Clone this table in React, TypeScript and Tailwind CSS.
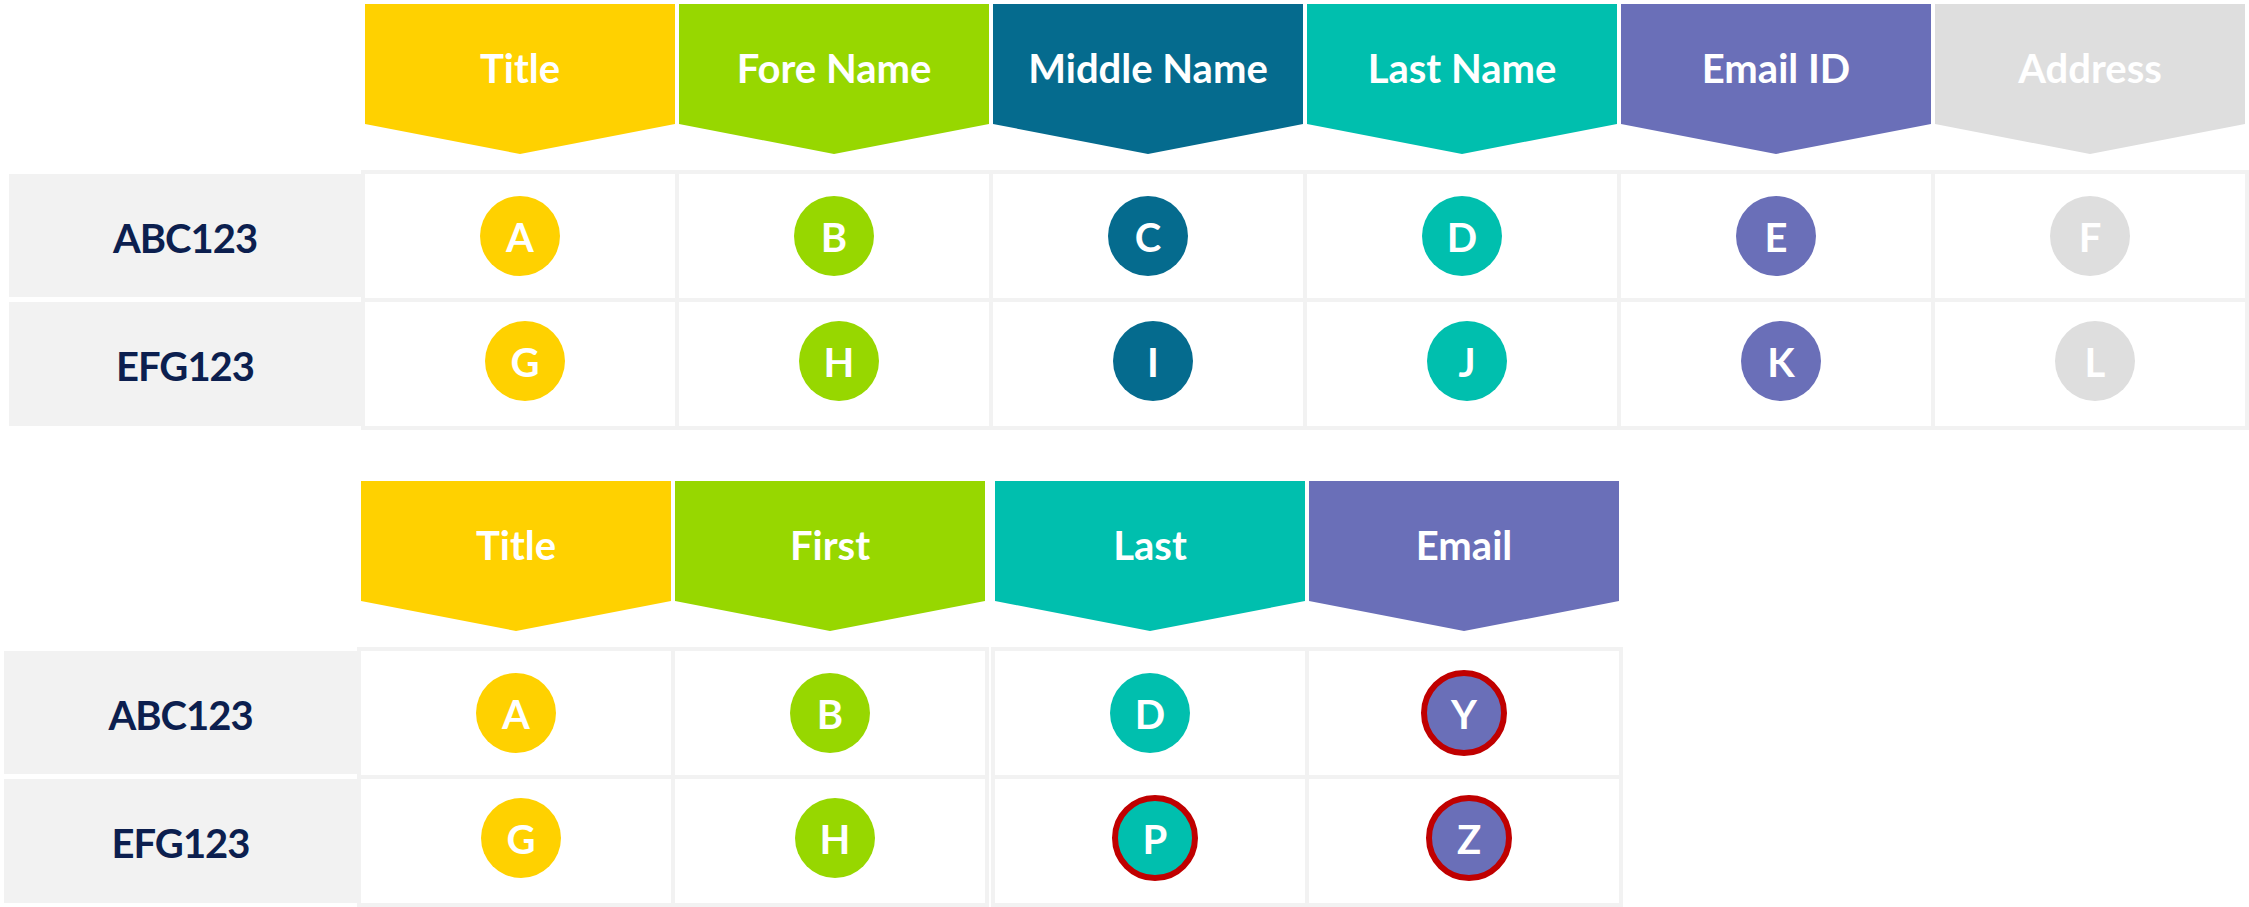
import React from "react";

type Col = { title: string; color: string };

const FONT = "font-['Lato','Open_Sans',sans-serif]";

const HeaderShape = ({ title, color }: Col) => (
  <div
    className={`w-[310px] h-[150px] shrink-0 [clip-path:polygon(0_0,100%_0,100%_80%,50%_100%,0_80%)] ${color}`}
  >
    <div className="h-[120px] pt-[8px] flex items-center justify-center text-white font-bold text-[40px] leading-none">
      {title}
    </div>
  </div>
);

type CellData = { letter: string; color: string; ring?: boolean };

const Circle = ({ letter, color, ring, shifted }: CellData & { shifted?: boolean }) => (
  <div
    className={`bg-white h-[124px] flex items-center justify-center ${
      shifted ? "pl-[10px] pb-[6px]" : ""
    }`}
  >
    {ring ? (
      <div
        className={`w-[86px] h-[86px] rounded-full border-[6px] border-[#c00000] flex items-center justify-center text-white font-bold text-[40px] leading-none pt-[2px] ${color}`}
      >
        {letter}
      </div>
    ) : (
      <div
        className={`w-[80px] h-[80px] rounded-full flex items-center justify-center text-white font-bold text-[40px] leading-none pt-[2px] ${color}`}
      >
        {letter}
      </div>
    )}
  </div>
);

const Labels = ({ width }: { width: string }) => (
  <div className={`${width} shrink-0 flex flex-col pt-[4px] gap-[5px]`}>
    <div className="h-[123px] bg-[#f2f2f2] flex items-center justify-center pt-[4px] text-[#0c1f4f] font-bold text-[40px] leading-none tracking-[-1px]">
      ABC123
    </div>
    <div className="h-[124px] bg-[#f2f2f2] flex items-center justify-center pt-[4px] text-[#0c1f4f] font-bold text-[40px] leading-none tracking-[-1px]">
      EFG123
    </div>
  </div>
);

const Y = "bg-[#ffd100]";
const G = "bg-[#97d700]";
const DT = "bg-[#056b8e]";
const T = "bg-[#00bfae]";
const P = "bg-[#6a6fb8]";
const L = "bg-[#dedede]";

const topCols: Col[] = [
  { title: "Title", color: Y },
  { title: "Fore Name", color: G },
  { title: "Middle Name", color: DT },
  { title: "Last Name", color: T },
  { title: "Email ID", color: P },
  { title: "Address", color: L },
];

const topRow1: CellData[] = [
  { letter: "A", color: Y },
  { letter: "B", color: G },
  { letter: "C", color: DT },
  { letter: "D", color: T },
  { letter: "E", color: P },
  { letter: "F", color: L },
];
const topRow2: CellData[] = [
  { letter: "G", color: Y },
  { letter: "H", color: G },
  { letter: "I", color: DT },
  { letter: "J", color: T },
  { letter: "K", color: P },
  { letter: "L", color: L },
];

export default function App() {
  return (
    <div className={`w-[2249px] h-[907px] bg-white overflow-hidden ${FONT}`}>
      {/* Top table */}
      <div className="pt-[4px] pl-[365px] flex gap-[4px]">
        {topCols.map((c) => (
          <HeaderShape key={c.title} {...c} />
        ))}
      </div>
      <div className="mt-[16px] pl-[9px] flex">
        <Labels width="w-[352px]" />
        <div className="bg-[#f2f2f2] p-[4px] grid grid-cols-[repeat(6,310px)] gap-[4px]">
          {topRow1.map((c) => (
            <Circle key={c.letter} {...c} />
          ))}
          {topRow2.map((c) => (
            <Circle key={c.letter} {...c} shifted />
          ))}
        </div>
      </div>

      {/* Bottom table */}
      <div className="mt-[51px] pl-[361px] flex">
        <div className="flex gap-[4px]">
          <HeaderShape title="Title" color={Y} />
          <HeaderShape title="First" color={G} />
        </div>
        <div className="ml-[10px] flex gap-[4px]">
          <HeaderShape title="Last" color={T} />
          <HeaderShape title="Email" color={P} />
        </div>
      </div>
      <div className="mt-[16px] pl-[4px] flex">
        <Labels width="w-[353px]" />
        <div className="bg-[#f2f2f2] p-[4px] grid grid-cols-[repeat(2,310px)] gap-[4px]">
          <Circle letter="A" color={Y} />
          <Circle letter="B" color={G} />
          <Circle letter="G" color={Y} shifted />
          <Circle letter="H" color={G} shifted />
        </div>
        <div className="ml-[2px] bg-[#f2f2f2] p-[4px] grid grid-cols-[repeat(2,310px)] gap-[4px]">
          <Circle letter="D" color={T} />
          <Circle letter="Y" color={P} ring />
          <Circle letter="P" color={T} ring shifted />
          <Circle letter="Z" color={P} ring shifted />
        </div>
      </div>
    </div>
  );
}
